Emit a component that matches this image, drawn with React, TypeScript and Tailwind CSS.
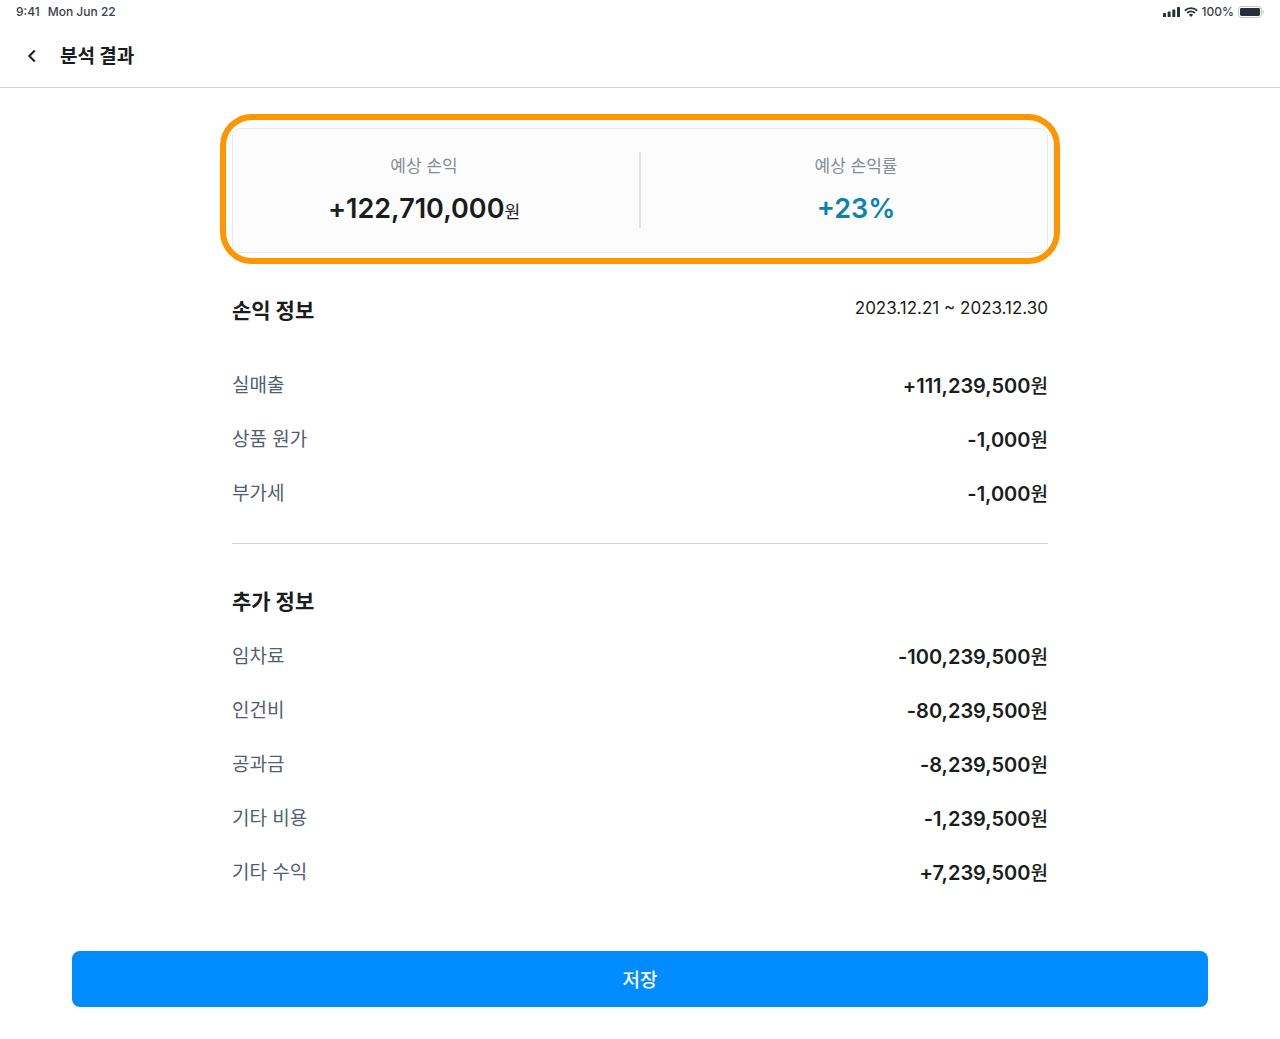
type RowItem = { label: string; value: string };

const profitRows: RowItem[] = [
  { label: '실매출', value: '+111,239,500' },
  { label: '상품 원가', value: '-1,000' },
  { label: '부가세', value: '-1,000' },
];

const extraRows: RowItem[] = [
  { label: '임차료', value: '-100,239,500' },
  { label: '인건비', value: '-80,239,500' },
  { label: '공과금', value: '-8,239,500' },
  { label: '기타 비용', value: '-1,239,500' },
  { label: '기타 수익', value: '+7,239,500' },
];

function StatusBar() {
  return (
    <div className="flex h-6 items-center justify-between px-4 text-xs font-medium text-[#3c404a]">
      <div className="flex gap-2">
        <span>9:41</span>
        <span>Mon Jun 22</span>
      </div>
      <div className="flex items-center gap-1">
        <svg width="17" height="10" viewBox="0 0 17 10" fill="#2b2f3a" aria-hidden="true">
          <rect x="0" y="6" width="3" height="4" rx="0.6" />
          <rect x="4.6" y="4.4" width="3" height="5.6" rx="0.6" />
          <rect x="9.3" y="2.4" width="3" height="7.6" rx="0.6" />
          <rect x="14" y="0" width="3" height="10" rx="0.6" />
        </svg>
        <svg width="14" height="10" viewBox="0 0 14 10" fill="none" stroke="#2b2f3a" strokeWidth="1.8" aria-hidden="true">
          <path d="M0.8 3.6a8.8 8.8 0 0 1 12.4 0" />
          <path d="M3.1 6a5.5 5.5 0 0 1 7.8 0" />
          <path d="M7 9.9 4.9 7.8a3 3 0 0 1 4.2 0z" fill="#2b2f3a" stroke="none" />
        </svg>
        <span>100%</span>
        <svg width="26" height="12" viewBox="0 0 26 12" fill="none" aria-hidden="true">
          <rect x="0.5" y="0.5" width="23" height="11" rx="3" stroke="#c4c5c8" />
          <rect x="2" y="2" width="20" height="8" rx="1.4" fill="#2b2f3a" />
          <path d="M24.6 4v4c.8-.3 1.3-1.1 1.3-2s-.5-1.7-1.3-2z" fill="#c4c5c8" />
        </svg>
      </div>
    </div>
  );
}

function Rows({ items }: { items: RowItem[] }) {
  return (
    <dl>
      {items.map(item => (
        <div key={item.label} className="flex h-[54px] items-center justify-between">
          <dt className="text-[19px] text-[#555d6d]">{item.label}</dt>
          <dd className="text-xl font-semibold">
            {item.value}
            <span className="text-[19px] font-medium">원</span>
          </dd>
        </div>
      ))}
    </dl>
  );
}

export default function App() {
  return (
    <div className="min-h-screen bg-white font-['Inter','Noto_Sans_CJK_KR',sans-serif] text-[#1a1c20]">
      <StatusBar />
      <header className="flex h-16 items-center gap-4 border-b border-[#d1d3d8] px-5">
        <button type="button" aria-label="뒤로" className="flex size-6 items-center justify-center">
          <svg width="24" height="24" viewBox="0 0 24 24" fill="none" stroke="currentColor" strokeWidth="2" aria-hidden="true">
            <path d="M14.8 6.5 9.3 12l5.5 5.5" />
          </svg>
        </button>
        <h1 className="font-['Noto_Sans_CJK_KR',sans-serif] text-[19px] font-bold">분석 결과</h1>
      </header>

      <main className="mx-auto max-w-[840px] pt-[26px]">
        <section className="rounded-[32px] border-6 border-[#ff9500] px-[6px] pt-2 pb-[5px]">
          <div className="flex gap-6 rounded-lg border border-[#e8e9ec] bg-[#fcfcfd] pt-[23px] pb-[22px]">
            <div className="flex-1 text-center">
              <p className="text-[17px] leading-7 text-[#868b94]">예상 손익</p>
              <p className="mt-[11px] text-[27px] leading-9 font-semibold">
                +122,710,000<span className="text-[17px] font-normal">원</span>
              </p>
            </div>
            <div className="h-[76px] w-0.5 bg-[#e0e1e5]" />
            <div className="flex-1 text-center">
              <p className="text-[17px] leading-7 text-[#868b94]">예상 손익률</p>
              <p className="mt-[11px] text-[27px] leading-9 font-semibold text-[#0a82b4]">+23%</p>
            </div>
          </div>
        </section>

        <div className="px-3">
          <section className="border-b border-[#d1d3d8] pt-8 pb-[22px]">
            <div className="mb-[33px] flex items-start justify-between">
              <h2 className="text-[21px] leading-[30px] font-bold">손익 정보</h2>
              <p className="text-[17px] leading-6">2023.12.21 ~ 2023.12.30</p>
            </div>
            <Rows items={profitRows} />
          </section>

          <section className="pt-[43px]">
            <h2 className="mb-[13px] text-[21px] leading-[30px] font-bold">추가 정보</h2>
            <Rows items={extraRows} />
          </section>
        </div>
      </main>

      <div className="px-[72px] pt-[51px] pb-8">
        <button type="button" className="h-14 w-full rounded-lg bg-[#008cff] font-['Noto_Sans_CJK_KR',sans-serif] text-[19px] font-medium text-white">
          저장
        </button>
      </div>
    </div>
  );
}
